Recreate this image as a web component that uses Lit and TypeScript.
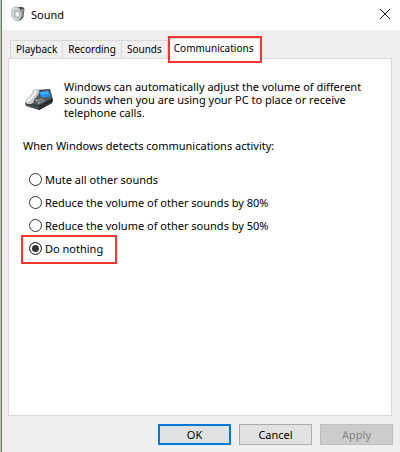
import { LitElement, html, css, svg } from "lit";
import { customElement, state } from "lit/decorators.js";

const speakerIcon = svg`
  <svg class="speaker" viewBox="0 0 14 16" aria-hidden="true">
    <path d="M6 1 12 1 13.500 3 12.500 11 10 14 6 15Z" fill="#4c5052"/>
    <path d="M10 3 13 3 12 10 10 12Z" fill="#8b9092"/>
    <ellipse cx="5.400" cy="7.800" rx="4.800" ry="7" transform="rotate(-8 5.4 7.8)" fill="#dde0e1" stroke="#a4a9ab" stroke-width=".8"/>
    <ellipse cx="5.800" cy="8" rx="3.400" ry="5" transform="rotate(-8 5.8 8)" fill="#b6bbbd"/>
    <ellipse cx="6.300" cy="8.200" rx="1.700" ry="2.500" fill="#f1f3f3"/>
  </svg>`;

const phoneIcon = svg`
  <svg class="phone" viewBox="0 0 28 21" aria-hidden="true">
    <path d="M0 14 12 1 25 0 28 11 27 14 14 21 1 17Z" fill="#3c4143"/>
    <path d="M14 17 28 10 27 14 14 21Z" fill="#1c1f20"/>
    <path d="M8 10 14 3 25 1 27 9 14 16 3 14Z" fill="#53595b"/>
    <path d="M14 3 23 1.500 26 7.500 17 9Z" fill="#2391e8"/>
    <path d="M15 3.500 22.500 2.200 23.500 4.500 16.200 6Z" fill="#48adf8"/>
    <path d="M10 11 16 9.500 20 12 13.500 15Z" fill="#a6acae"/>
    <path d="M12 10.500 16 13.800M14 10 18 13M11.500 13.500 18 10.800" stroke="#43494b" stroke-width=".7"/>
    <path d="M0 13Q1 10 3 9L7 4Q7 1 10 0L14 0Q15 3 13 6L9 11Q9 14 6 15L2 15Z" fill="#c6cacc"/>
    <path d="M2 12.500 5 10.500 9.500 5 11.500 1.500" stroke="#f4f5f5" stroke-width="2" fill="none"/>
    <path d="M1 16 14 19 27 13" stroke="#6d7375" stroke-width=".5" fill="none"/>
  </svg>`;

@customElement("app-root")
export class AppRoot extends LitElement {
  @state() private tab = "Communications";
  @state() private choice = 3;

  private tabs = ["Playback", "Recording", "Sounds", "Communications"];
  private options = [
    "Mute all other sounds",
    "Reduce the volume of other sounds by 80%",
    "Reduce the volume of other sounds by 50%",
    "Do nothing",
  ];

  static styles = css`
    :host {
      display: flex;
      flex-direction: column;
      box-sizing: border-box;
      min-height: 100vh;
      background: #efefef;
      border-left: 1px solid #b9c2c1;
      color: #000;
      font: 11px/13px "Noto Sans", "Open Sans", sans-serif;
    }
    * { box-sizing: border-box; }
    button { font: inherit; color: inherit; margin: 0; padding: 0; }
    .dialog {
      flex: 1;
      display: flex;
      flex-direction: column;
      border-left: 1px solid #a85a5a;
    }
    .title {
      display: flex;
      align-items: center;
      height: 30px;
      padding: 0 9px 2px 9px;
      background: #fff;
    }
    h1 { flex: 1; margin: 0 0 0 6px; font-size: 11px; font-weight: 400; }
    .speaker { width: 14px; height: 16px; }
    .close { display: flex; border: 0; background: none; }
    .close svg { width: 12px; height: 12px; }
    .tabs {
      display: flex;
      align-items: flex-end;
      height: 28px;
      padding-left: 8px;
      font-size: 10px;
    }
    .tab {
      height: 18px;
      padding: 0 5px;
      border: 1px solid #d9d9d9;
      border-bottom: 0;
      border-left: 0;
      background: #efefef;
      white-space: nowrap;
    }
    .tab:first-child { border-left: 1px solid #d9d9d9; }
    .tab.selected {
      position: relative;
      height: 21px;
      margin-bottom: -1px;
      padding: 0 8px 2px 6px;
      background: #fff;
    }
    .mark::after {
      content: "";
      position: absolute;
      border: 2px solid #fb3434;
      pointer-events: none;
    }
    .tab.mark::after { inset: -3px -1px -4px 0; }
    .panel {
      flex: 1;
      margin: 0 8px 8px 6px;
      padding: 21px 14px;
      border: 1px solid #d9d9d9;
      background: #fff;
    }
    .intro { display: flex; gap: 11px; }
    .intro p { margin: 0; }
    .phone { flex: none; width: 28px; height: 21px; margin: 9px 0 0 2px; }
    fieldset { margin: 20px 0 0; padding: 0; border: 0; }
    legend { padding: 0; margin-bottom: 16px; }
    .option {
      position: relative;
      display: flex;
      align-items: center;
      gap: 3px;
      width: fit-content;
      height: 23px;
      padding-left: 6px;
    }
    .option input {
      appearance: none;
      width: 13px;
      height: 13px;
      margin: 0;
      border: 1px solid #333;
      border-radius: 50%;
      background: #fff;
    }
    .option input:checked { background: #333; box-shadow: inset 0 0 0 2px #fff; }
    .option.mark::after { inset: -2px -14px -4px -2px; }
    .actions {
      display: flex;
      justify-content: flex-end;
      gap: 8px;
      padding: 0 7px 7px 0;
    }
    .actions button {
      width: 73px;
      height: 21px;
      border: 1px solid #adadad;
      background: #e1e1e1;
    }
    .actions .primary { border: 2px solid #0078d7; }
    .actions button:disabled { border-color: #bfbfbf; background: #ccc; color: #838383; }
  `;

  render() {
    return html`
      <div class="dialog">
        <header class="title">
          ${speakerIcon}
          <h1>Sound</h1>
          <button class="close" aria-label="Close">
            <svg viewBox="0 0 12 12"><path d="M1 1 11 11M11 1 1 11" stroke="#111" fill="none"/></svg>
          </button>
        </header>
        <div class="tabs" role="tablist">
          ${this.tabs.map((name) => html`
            <button role="tab" aria-selected=${name === this.tab}
              class="tab ${name === this.tab ? "selected mark" : ""}"
              @click=${() => (this.tab = name)}>${name}</button>`)}
        </div>
        <main class="panel" role="tabpanel">
          <div class="intro">
            ${phoneIcon}
            <p>Windows can automatically adjust the volume of different sounds when you are using your PC to place or receive telephone calls.</p>
          </div>
          <fieldset>
            <legend>When Windows detects communications activity:</legend>
            ${this.options.map((text, i) => html`
              <label class="option ${i === 3 ? "mark" : ""}">
                <input type="radio" name="activity" .checked=${i === this.choice}
                  @change=${() => (this.choice = i)}>
                <span>${text}</span>
              </label>`)}
          </fieldset>
        </main>
        <footer class="actions">
          <button class="primary">OK</button>
          <button>Cancel</button>
          <button disabled>Apply</button>
        </footer>
      </div>`;
  }
}
